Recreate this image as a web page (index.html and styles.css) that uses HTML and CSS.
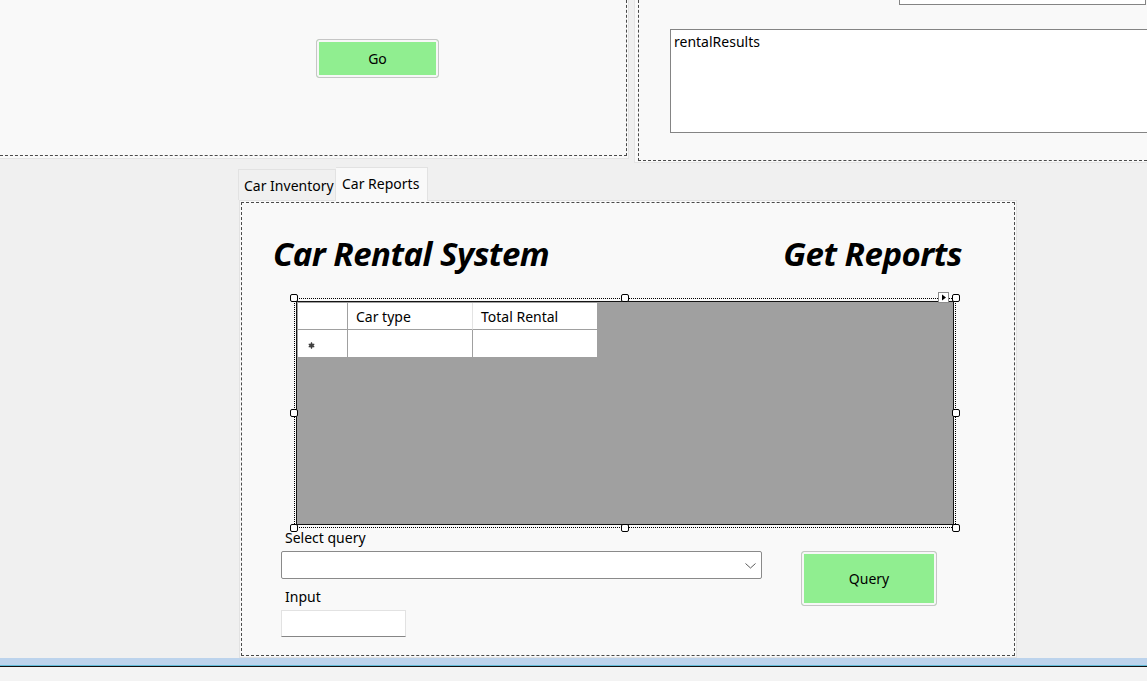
FILE: index.html
```html
<!DOCTYPE html>
<html>
<head>
<meta charset="utf-8">
<title>Car Rental System</title>
<link rel="stylesheet" href="styles.css">
</head>
<body>
<div class="screen">
  <div class="top-row">
    <div class="panel panel-left">
      <div class="dash dash-left">
        <button class="btn btn-go">Go</button>
      </div>
    </div>
    <div class="panel panel-right">
      <div class="dash dash-right">
        <div class="textbox-top"></div>
        <div class="results">rentalResults</div>
      </div>
    </div>
  </div>

  <div class="tabs">
    <div class="tab-strip">
      <div class="tab">Car Inventory</div>
      <div class="tab tab-active">Car Reports</div>
    </div>
    <div class="tab-page">
      <div class="dash dash-page">
        <div class="titles">
          <h1 class="title">Car Rental System</h1>
          <h1 class="title">Get Reports</h1>
        </div>

        <div class="grid-frame">
          <span class="handle h-tl"></span>
          <span class="handle h-tm"></span>
          <span class="handle h-tr"></span>
          <span class="handle h-ml"></span>
          <span class="handle h-mr"></span>
          <span class="handle h-bl"></span>
          <span class="handle h-bm"></span>
          <span class="handle h-br"></span>
          <span class="smart-tag">
            <svg width="9" height="9" viewBox="0 0 9 9"><path d="M3 1.5 L7 4.5 L3 7.5 Z" fill="#000"/></svg>
          </span>
          <div class="dgv">
            <div class="dgv-table">
              <div class="cell hdr row-hdr"></div>
              <div class="cell hdr col-a">Car type</div>
              <div class="cell hdr col-b">Total Rental</div>
              <div class="cell row-hdr new-row">
                <svg width="7" height="7" viewBox="0 0 7 7"><circle cx="3.5" cy="3.5" r="2.3" fill="#5a5a5a"/><path d="M3.5 0.3 V6.7 M0.7 1.9 L6.3 5.1 M0.7 5.1 L6.3 1.9" stroke="#3c3c3c" stroke-width="1.2"/></svg>
              </div>
              <div class="cell col-a"></div>
              <div class="cell col-b"></div>
            </div>
          </div>
        </div>

        <div class="query-row">
          <div class="query-fields">
            <div class="field-label">Select query</div>
            <div class="combo">
              <svg width="11" height="6" viewBox="0 0 11 6"><path d="M0.5 0.5 L5.5 5 L10.5 0.5" fill="none" stroke="#5a5a5a" stroke-width="1"/></svg>
            </div>
            <div class="field-label label-input">Input</div>
            <div class="input-box"></div>
          </div>
          <button class="btn btn-query">Query</button>
        </div>
      </div>
    </div>
  </div>

  <div class="status-blue"></div>
  <div class="status-rest"></div>
</div>
</body>
</html>
```

FILE: styles.css
```css
* {
  box-sizing: border-box;
}

body {
  margin: 0;
  font-family: "Noto Sans", "Open Sans", sans-serif;
  font-size: 14px;
  color: #000;
  background: #f0f0f0;
}

.screen {
  width: 1147px;
  height: 681px;
  display: flex;
  flex-direction: column;
  overflow: hidden;
  background: #f0f0f0;
}

/* ---------- top row ---------- */
.top-row {
  display: flex;
  gap: 5px;
  height: 163px;
  flex-shrink: 0;
}

.panel {
  background: #f9f9f9;
}

.dash {
  border: 0 dashed #4a4a4a;
}

.panel-left {
  width: 629px;
  height: 159px;
  border-right: 1px solid #e4e4e4;
  border-bottom: 1px solid #e4e4e4;
  padding: 0 1px 2px 0;
}

.dash-left {
  height: 100%;
  border-right-width: 1px;
  border-bottom-width: 1px;
  padding: 39px 0 0 316px;
}

.panel-right {
  flex: 1;
  height: 163px;
  border-left: 1px solid #e4e4e4;
  border-bottom: 1px solid #e4e4e4;
  padding: 0 0 1px 3px;
  overflow: hidden;
}

.dash-right {
  height: 100%;
  border-left-width: 1px;
  border-bottom-width: 1px;
  overflow: hidden;
}

.textbox-top {
  width: 247px;
  height: 27px;
  margin: -22px 0 0 260px;
  background: #fff;
  border: 1px solid #848484;
}

.results {
  width: 520px;
  height: 104px;
  margin: 24px 0 0 31px;
  background: #fff;
  border: 1px solid #848484;
  padding: 2px 3px;
  line-height: 20px;
}

/* ---------- buttons ---------- */
.btn {
  font-family: inherit;
  font-size: 14px;
  color: #000;
  background: #90ee90;
  border: 1px solid #c6c6c6;
  border-radius: 3px;
  box-shadow: inset 0 0 0 2px #f7f7f7;
  padding: 0;
  display: flex;
  align-items: center;
  justify-content: center;
}

.btn-go {
  width: 123px;
  height: 39px;
}

.btn-query {
  width: 136px;
  height: 55px;
  margin: 23px 0 0 39px;
}

/* ---------- tabs ---------- */
.tabs {
  margin: 4px 0 0 238px;
  width: 779px;
  flex-shrink: 0;
}

.tab-strip {
  display: flex;
  align-items: flex-end;
  height: 33px;
}

.tab {
  height: 31px;
  width: 98px;
  padding: 6px 0 0 5px;
  line-height: 20px;
  border: 1px solid #e2e2e2;
  border-bottom: none;
  background: #f0f0f0;
  white-space: nowrap;
}

.tab-active {
  position: relative;
  z-index: 1;
  width: 92px;
  height: 34px;
  margin-bottom: -1px;
  border-left: none;
  background: #f9f9f9;
  padding: 6px 0 0 6px;
}

.tab-page {
  width: 778px;
  height: 458px;
  margin-left: 1px;
  background: #f9f9f9;
  border: 1px solid #e2e2e2;
  padding: 1px;
}

.dash-page {
  height: 100%;
  border-width: 1px;
}

/* ---------- titles ---------- */
.titles {
  display: flex;
  justify-content: space-between;
  padding: 0 52px 0 31px;
  margin-top: 29px;
}

.title {
  margin: 0;
  font-size: 33px;
  font-weight: 700;
  font-style: italic;
  line-height: 44px;
  letter-spacing: -0.5px;
}

/* ---------- grid ---------- */
.grid-frame {
  position: relative;
  width: 662px;
  height: 230px;
  margin: 22px 0 0 52px;
  border: 1px dotted #000;
}

.handle {
  position: absolute;
  width: 8px;
  height: 8px;
  background: #fff;
  border: 1px solid #000;
  border-radius: 2px;
  z-index: 2;
}

.h-tl { left: -5px; top: -5px; }
.h-tm { left: calc(50% - 4px); top: -5px; }
.h-tr { right: -5px; top: -5px; }
.h-ml { left: -5px; top: calc(50% - 4px); }
.h-mr { right: -5px; top: calc(50% - 4px); }
.h-bl { left: -5px; bottom: -5px; }
.h-bm { left: calc(50% - 4px); bottom: -5px; }
.h-br { right: -5px; bottom: -5px; }

.smart-tag {
  position: absolute;
  right: 6px;
  top: -7px;
  width: 11px;
  height: 11px;
  background: #fff;
  border: 1px solid #8c8c8c;
  display: flex;
  align-items: center;
  justify-content: center;
  z-index: 2;
}

.dgv {
  height: 224px;
  margin: 2px 1px;
  background: #a0a0a0;
  border: 1px solid #141414;
  padding: 1px 0 0 1px;
}

.dgv-table {
  display: grid;
  grid-template-columns: 50px 125px 125px;
  grid-template-rows: 27px 28px;
  width: 300px;
}

.cell {
  background: #fff;
  border-right: 1px solid #a0a0a0;
  border-bottom: 1px solid #a0a0a0;
  padding-left: 8px;
  display: flex;
  align-items: center;
  white-space: nowrap;
}

.hdr.col-a {
  border-right-color: #e3e3e3;
}

.hdr.col-b {
  border-right-color: #a0a0a0;
}

.new-row {
  padding: 4px 0 0 10px;
}

/* ---------- query area ---------- */
.query-row {
  display: flex;
  align-items: flex-start;
}

.query-fields {
  width: 481px;
  margin-left: 39px;
}

.field-label {
  padding-left: 4px;
  line-height: 20px;
}

.label-input {
  margin-top: 8px;
}

.combo {
  height: 28px;
  margin-top: 3px;
  background: #fff;
  border: 1px solid #8a8a8a;
  border-radius: 2px;
  display: flex;
  align-items: center;
  justify-content: flex-end;
  padding: 2px 5px 0 0;
}

.input-box {
  width: 125px;
  height: 27px;
  margin-top: 3px;
  background: #fff;
  border: 1px solid #e2e2e2;
  border-bottom-color: #868686;
}

/* ---------- status ---------- */
.status-blue {
  height: 8px;
  flex-shrink: 0;
  background: #bcd3ec;
  border-bottom: 1px solid #62bcda;
}

.status-rest {
  flex: 1;
  background: #f3f3f3;
  border-top: 1px solid #111;
}
```
